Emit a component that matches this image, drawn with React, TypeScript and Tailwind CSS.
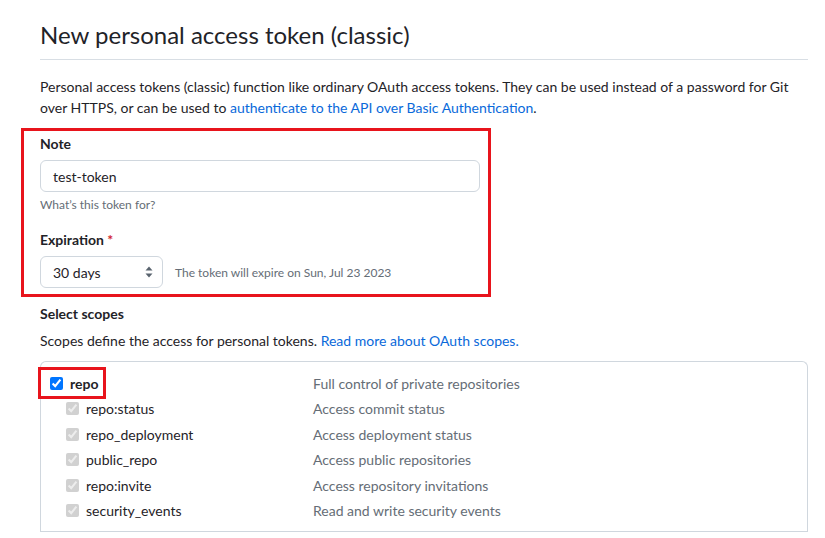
const scopes = [
  { name: 'repo:status', desc: 'Access commit status' },
  { name: 'repo_deployment', desc: 'Access deployment status' },
  { name: 'public_repo', desc: 'Access public repositories' },
  { name: 'repo:invite', desc: 'Access repository invitations' },
  { name: 'security_events', desc: 'Read and write security events' },
];

function SelectArrows() {
  return (
    <svg width="8" height="12" viewBox="0 0 8 12" className="text-[#59636e]">
      <path d="M4 0.5L7.5 4.5H0.5L4 0.5Z" fill="currentColor" />
      <path d="M4 11.5L0.5 7.5H7.5L4 11.5Z" fill="currentColor" />
    </svg>
  );
}

export default function App() {
  return (
    <div
      className="min-h-screen bg-white text-[#1f2328] text-[14px] leading-[21px]"
      style={{ fontFamily: 'Lato, "Noto Sans", sans-serif' }}
    >
      <div className="pl-[40px] pr-[17px] pt-[17px]">
        {/* header */}
        <div className="border-b border-[#d8dee4] pb-[6px]">
          <h1 className="text-[24px] leading-[36px] font-normal">New personal access token (classic)</h1>
        </div>

        <p className="mt-[16px]">
          Personal access tokens (classic) function like ordinary OAuth access tokens. They can be used instead of a
          password for Git over HTTPS, or can be used to{' '}
          <a className="text-[#0969da]">authenticate to the API over Basic Authentication</a>.
        </p>

        {/* highlighted form */}
        <div className="relative mt-[15px] w-[440px]">
          <div className="pointer-events-none absolute left-[-19px] right-[-11px] top-[-5px] bottom-[-9px] border-[3px] border-[#e8141c]" />

          <label className="block font-bold">Note</label>
          <div className="mt-[6px] h-[32px] rounded-[6px] border border-[#d0d7de] px-[12px] flex items-center">
            test-token
          </div>
          <div className="mt-[4px] text-[12px] leading-[18px] text-[#656d76]">What’s this token for?</div>

          <label className="mt-[15px] block font-bold">
            Expiration <span className="text-[#d1242f]">*</span>
          </label>
          <div className="mt-[6px] flex items-center">
            <div className="h-[32px] w-[123px] rounded-[6px] border border-[#d0d7de] pl-[12px] pr-[9px] flex items-center justify-between">
              <span>30 days</span>
              <SelectArrows />
            </div>
            <span className="ml-[12px] text-[12px] text-[#656d76]">The token will expire on Sun, Jul 23 2023</span>
          </div>
        </div>

        {/* scopes */}
        <div className="mt-[15px] font-bold">Select scopes</div>
        <p className="mt-[6px]">
          Scopes define the access for personal tokens.{' '}
          <a className="text-[#0969da]">Read more about OAuth scopes.</a>
        </p>

        <div className="mt-[10px] rounded-t-[6px] border-x border-t border-[#d0d7de]">
          <div className="pt-[8px] pb-[7px] border-b border-[#d0d7de]">
            <div className="flex items-center h-[26px]">
              <div className="w-[272px] pl-[9px] flex items-center">
                <div className="relative flex items-center">
                  <div className="pointer-events-none absolute left-[-12px] top-1/2 -translate-y-1/2 w-[68px] h-[32px] border-[3px] border-[#e8141c]" />
                  <input type="checkbox" checked readOnly className="h-[13px] w-[13px] m-0" />
                  <span className="ml-[7px] font-bold">repo</span>
                </div>
              </div>
              <span className="text-[#656d76]">Full control of private repositories</span>
            </div>
            {scopes.map((s) => (
              <div key={s.name} className="flex items-center h-[25.5px]">
                <div className="w-[272px] pl-[25px] flex items-center">
                  <input type="checkbox" checked disabled readOnly className="h-[13px] w-[13px] m-0" />
                  <span className="ml-[7px]">{s.name}</span>
                </div>
                <span className="text-[#656d76]">{s.desc}</span>
              </div>
            ))}
          </div>
        </div>
      </div>
    </div>
  );
}
